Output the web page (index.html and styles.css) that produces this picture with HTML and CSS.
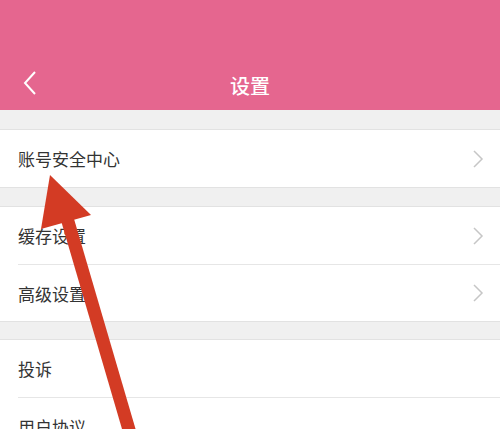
FILE: index.html
```html
<!DOCTYPE html>
<html lang="zh-CN">
<head>
    <meta charset="UTF-8">
    <meta name="viewport" content="width=device-width, initial-scale=1.0">
    <title>设置</title>
    <link rel="stylesheet" href="styles.css">
</head>
<body>
    <div class="header">
        <div class="nav">
            <span class="back">
                <svg width="16" height="26" viewBox="0 0 16 26"><path d="M13 2 L3 13 L13 24" fill="none" stroke="#fff" stroke-width="2"/></svg>
            </span>
            <h1>设置</h1>
        </div>
    </div>

    <div class="group">
        <div class="row"><span>账号安全中心</span><svg class="arrow" width="12" height="18" viewBox="0 0 12 18"><path d="M2 1 L10 9 L2 17" fill="none" stroke="#c6c6c6" stroke-width="1.5"/></svg></div>
    </div>

    <div class="group">
        <div class="row"><span>缓存设置</span><svg class="arrow" width="12" height="18" viewBox="0 0 12 18"><path d="M2 1 L10 9 L2 17" fill="none" stroke="#c6c6c6" stroke-width="1.5"/></svg></div>
        <div class="row"><span>高级设置</span><svg class="arrow" width="12" height="18" viewBox="0 0 12 18"><path d="M2 1 L10 9 L2 17" fill="none" stroke="#c6c6c6" stroke-width="1.5"/></svg></div>
    </div>

    <div class="group">
        <div class="row"><span>投诉</span></div>
        <div class="row"><span>用户协议</span></div>
    </div>

    <svg class="pointer" width="500" height="429" viewBox="0 0 500 429">
        <line x1="132" y1="440" x2="67" y2="218" stroke="#d33b24" stroke-width="13"/>
        <polygon points="50,175 91,215 41,229" fill="#d33b24"/>
    </svg>
</body>
</html>
```

FILE: styles.css
```css
body {
    margin: 0;
    background: #f0f0f0;
    font-family: "Noto Sans CJK SC", "Noto Sans", sans-serif;
    color: #333;
    overflow: hidden;
    height: 429px;
}

.header {
    background: #e5668f;
    height: 110px;
    display: flex;
    flex-direction: column;
    justify-content: flex-end;
}

.nav {
    height: 50px;
    display: flex;
    align-items: center;
    justify-content: center;
    position: relative;
}

.nav h1 {
    margin: 0;
    font-size: 20px;
    font-weight: 500;
    color: #fff;
    line-height: 1;
    padding-top: 1px;
}

.back {
    position: absolute;
    left: 22px;
    top: 10px;
}

.group {
    margin-top: 17px;
    background: #fff;
    border-top: 1px solid #e2e2e2;
    border-bottom: 1px solid #e2e2e2;
}

.header + .group {
    margin-top: 19px;
}

.group:last-child,
.group:nth-of-type(3) {
    margin-top: 18px;
}

.row {
    height: 57px;
    margin-left: 18px;
    padding-right: 16px;
    display: flex;
    align-items: center;
    justify-content: space-between;
    font-size: 17px;
}

.row + .row {
    border-top: 1px solid #e6e6e6;
    height: 56px;
}

.pointer {
    position: absolute;
    top: 0;
    left: 0;
}
```
